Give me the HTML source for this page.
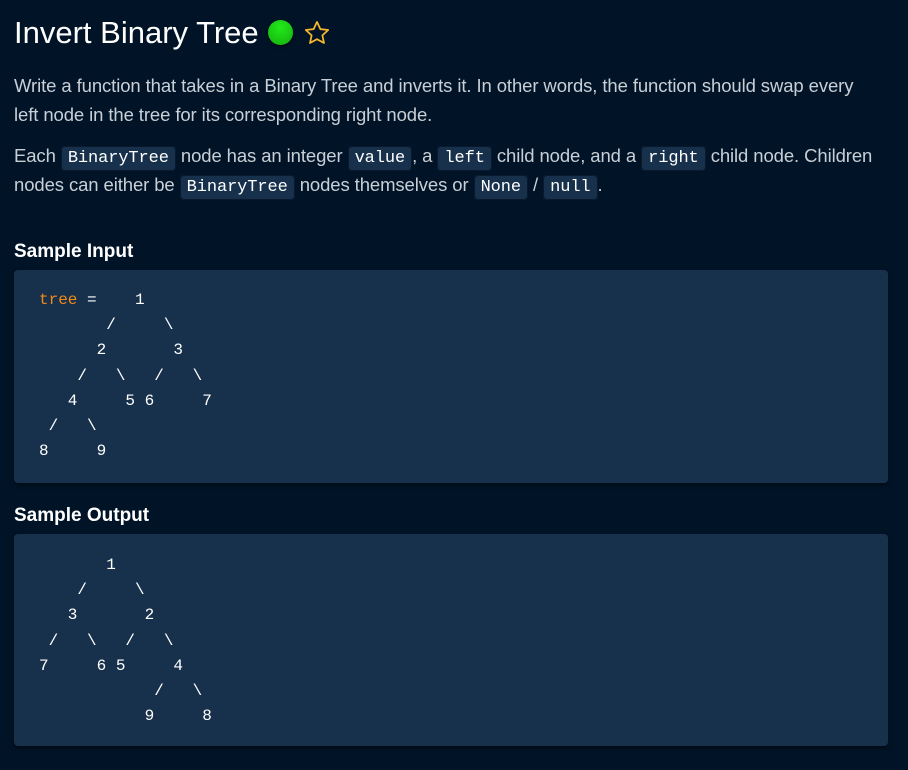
<!DOCTYPE html>
<html><head><meta charset="utf-8"><style>
html,body{margin:0;padding:0;background:#02162a;}
body{width:908px;height:770px;overflow:hidden;background:#011427;color:#c9cfd6;font-family:"Liberation Sans","DejaVu Sans",sans-serif;position:relative;}
h1{position:absolute;left:14px;top:13px;margin:0;font-size:31px;font-weight:normal;color:#fff;line-height:40px;white-space:nowrap;}
.dot{display:inline-block;width:25px;height:25px;border-radius:50%;background:radial-gradient(circle at 50% 30%,#22e81a,#14b00e);vertical-align:-2px;margin-left:9px;box-shadow:0 2px 3px rgba(0,0,0,.5);}
.star{display:inline-block;vertical-align:-4px;margin-left:10px;}
p{position:absolute;left:14px;margin:0;font-size:18.5px;line-height:29px;width:862px;letter-spacing:-0.1px;}
code{font-family:"Liberation Mono",monospace;font-size:17px;line-height:1;background:#17304b;color:#fff;border:1px solid #0a1a2c;border-radius:4px;padding:2px 6px;}
h2{position:absolute;left:14px;margin:0;font-size:19px;color:#fff;font-weight:bold;}
.box{position:absolute;left:14px;width:874px;background:#17304b;border-radius:4px;box-shadow:0 2px 4px rgba(0,0,0,.5);}
pre{margin:0;position:absolute;left:25px;font-family:"Liberation Mono",monospace;font-size:16px;line-height:25.2px;color:#fff;}
.o{color:#f08a1a;}
</style></head><body>
<h1>Invert Binary Tree<span class="dot"></span><svg class="star" width="28" height="28" viewBox="0 0 24 24"><path d="M12 2.5l2.9 6.2 6.7.7-5 4.6 1.4 6.6L12 17.3l-6 3.3 1.4-6.6-5-4.6 6.7-.7z" fill="none" stroke="#f5b82e" stroke-width="1.5" stroke-linejoin="round"/></svg></h1>
<p style="top:71px">Write a function that takes in a Binary Tree and inverts it. In other words, the function should swap every left node in the tree for its corresponding right node.</p>
<p style="top:141px">Each <code>BinaryTree</code> node has an integer <code>value</code>, a <code>left</code> child node, and a <code>right</code> child node. Children nodes can either be <code>BinaryTree</code> nodes themselves or <code>None</code> / <code>null</code>.</p>
<h2 style="top:241px">Sample Input</h2>
<div class="box" style="top:270px;height:213px"><pre style="top:18px"><span class="o">tree</span> =    1
       /     \
      2       3
    /   \   /   \
   4     5 6     7
 /   \
8     9</pre></div>
<h2 style="top:505px">Sample Output</h2>
<div class="box" style="top:534px;height:212px"><pre style="top:19px">       1
    /     \
   3       2
 /   \   /   \
7     6 5     4
            /   \
           9     8</pre></div>
</body></html>
